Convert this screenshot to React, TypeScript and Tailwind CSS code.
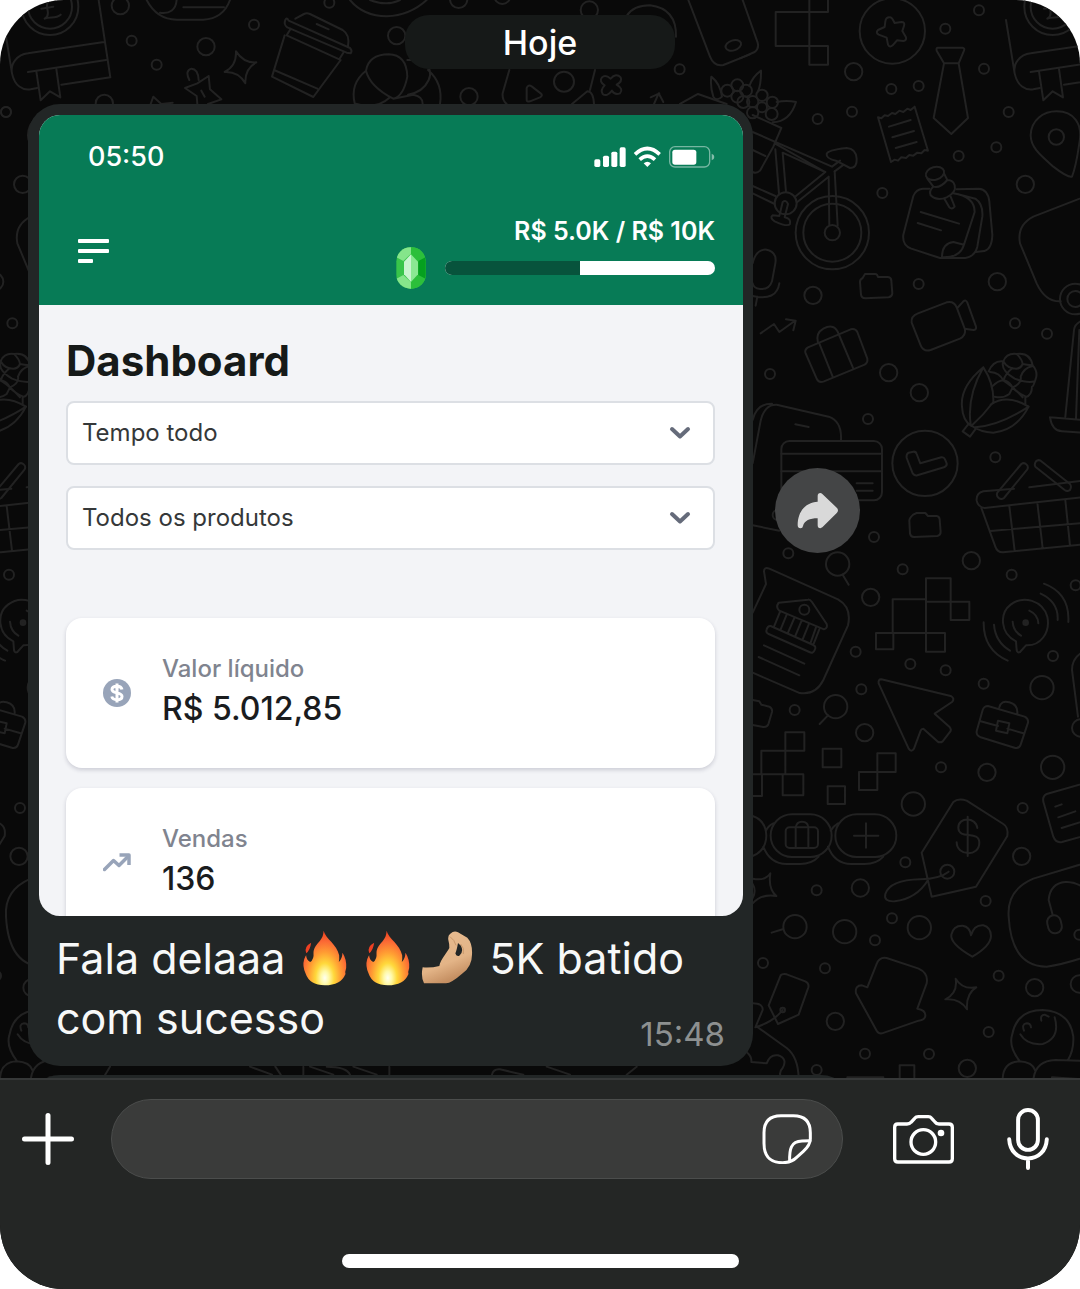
import type { ReactNode } from "react";

type Dot = [x: number, y: number, r: number];

// Wallpaper drawings use a 3x grid, so a radius of 15 is a 5px ring
const DOTS: Dot[] = [
  [717, 31, 15], [616, 86, 15], [732, 206, 15], [536, 258, 15], [454, 267, 15],
  [336, 335, 15], [233, 357, 15], [806, 336, 15], [769, 442, 15], [656, 468, 15],
  [427, 579, 15], [536, 852, 15], [825, 970, 15], [921, 1001, 15], [90, 1122, 15],
  [384, 1257, 15], [341, 215, 26], [856, 553, 26], [219, 886, 26], [772, 845, 26],
  [446, 1118, 26], [538, 1178, 26], [766, 1372, 15], [402, 1611, 15], [145, 1660, 15],
  [113, 1545, 15], [488, 1708, 15], [815, 1724, 15], [1007, 1756, 15], [347, 1955, 15],
  [511, 1992, 15], [617, 2011, 15], [939, 1968, 15], [731, 2051, 15], [364, 2068, 15],
  [164, 2130, 15], [694, 1682, 26], [392, 1792, 26], [374, 2198, 26], [906, 2063, 35],
  [1022, 2184, 26], [603, 2302, 15], [741, 2317, 26], [938, 2302, 35], [520, 2412, 35],
  [848, 2424, 15], [845, 2569, 26], [496, 2587, 15], [230, 2671, 15], [361, 2664, 26],
  [737, 2703, 15], [456, 2755, 15], [314, 2795, 35], [405, 2821, 15], [538, 2783, 35],
  [69, 2889, 15], [255, 2905, 15], [776, 2927, 15], [884, 2963, 26], [1018, 2952, 26],
  [286, 3064, 26], [746, 3096, 15], [375, 3161, 15], [567, 3162, 15], [230, 3210, 15],
  [682, 3205, 26], [1018, 2804, 15],
];

const TOP_DOTS: Dot[] = [
  [361, 17, 26], [395, 122, 15], [762, 74, 15], [618, 140, 26], [470, 194, 15],
  [18, 336, 15], [313, 310, 26], [988, 8, 15], [1190, 107, 26], [1376, -2, 26],
  [1507, -12, 24], [1768, 30, 26], [1692, 245, 30], [1407, 290, 26], [2039, 208, 15],
];

function Dots({ items }: { items: Dot[] }) {
  return (
    <>
      {items.map(([x, y, r]) => (
        <circle key={`${x}-${y}`} cx={x} cy={y} r={r} />
      ))}
    </>
  );
}

function Wallpaper() {
  return (
    <svg
      className="absolute inset-0 size-full"
      viewBox="0 0 1080 1078"
      preserveAspectRatio="xMidYMin slice"
      fill="none"
      stroke="#222222"
      strokeWidth="6"
      strokeLinecap="round"
      strokeLinejoin="round"
      aria-hidden="true"
    >
      <defs>
        <g id="book">
          <circle cx="150" cy="20" r="85" />
          <circle cx="150" cy="20" r="66" />
          <path d="M165 0C145-6 138 8 142 28C146 42 142 52 134 56C150 48 166 58 182 44M124 26L160 20" />
          <path d="M10 60L36 220C44 258 68 272 92 268L112 264M36 220C30 190 52 164 84 160L312 126M84 216L318 180M296 0L331 232L184 254" />
          <path d="M109 214L122 301L150 274L181 292L169 207" />
        </g>
        <g id="doodles">
          <Dots items={DOTS} />
          {/* phone, squares, coin */}
          <path d="M8 0L53 128Q58 145 44 156L0 175M107 36H208V138H107ZM208 0V194H264V138H208M208 36H264V0" />
          <circle cx="457" cy="93" r="98" />
          <path d="M448 52Q454 50 458 58L464 69L484 66Q496 66 492 78L487 93L498 112Q500 122 490 123L471 121L458 136Q449 144 444 134L440 113L416 104Q406 98 414 90L434 81L436 64Q438 52 448 52Z" />
          {/* tie */}
          <path d="M594 143H668Q675 145 672 152L656 190H612L590 152Q588 143 594 143ZM612 190L581 354L634 402L684 354L656 190" />
          {/* receipt */}
          <path d="M414 352L424 355L434 346L444 348L456 339L466 342L478 332L490 336L502 326L512 330L524 320L564 452L554 450L544 460L532 458L520 467L508 465L498 474L484 472L474 482L464 479L453 486ZM447 380L512 360M457 412L522 393M467 444L530 426" />
          {/* pineapple */}
          <path d="M28 258Q38 230 63 212Q64 250 54 275M110 306Q140 300 168 306Q150 365 98 367" />
          <g>
            <circle cx="18" cy="272" r="18" />
            <circle cx="66" cy="286" r="17" />
            <circle cx="38" cy="305" r="17" />
            <circle cx="97" cy="307" r="17" />
            <circle cx="66" cy="322" r="15" />
            <circle cx="10" cy="306" r="18" />
            <circle cx="38" cy="338" r="17" />
            <circle cx="95" cy="342" r="18" />
          </g>
          {/* bicycle */}
          <circle cx="277" cy="698" r="110" />
          <circle cx="277" cy="698" r="87" />
          <circle cx="277" cy="698" r="23" />
          <circle cx="137" cy="610" r="33" />
          <path d="M266 530L268 676M284 514L293 676M38 345L124 384L100 440L60 512Q50 522 38 516M38 396L276 500L300 482M38 450L76 468M104 430L256 516L168 588M106 448L117 580M128 458L138 576M128 458L256 516M172 606L266 530M38 558L106 588M38 580L104 612" />
          <path d="M320 444Q348 446 350 476Q352 504 330 504L288 482Q258 476 260 462Q262 450 320 444ZM284 514L308 496M128 606Q138 598 144 612L134 652Q154 656 150 672Q144 682 104 664Q88 654 98 646L118 648Z" />
          {/* map pin */}
          <circle cx="949" cy="411" r="23" />
          <path d="M996 530Q984 534 940 500C896 462 872 440 872 405C874 360 910 334 950 334C1000 334 1030 370 1018 430Q1008 500 996 530Z" />
          {/* notes */}
          <path d="M568 566H548Q528 568 520 588L490 704Q486 736 514 746L600 774H676Q704 770 712 740L727 650Q730 612 706 596L660 584M640 580Q704 590 704 636L672 734Q660 774 606 772Q606 730 640 726L672 734M650 568L716 566Q744 568 748 604L757 704Q756 752 726 754L708 756M542 636L657 671M533 669L603 691" />
          <ellipse cx="585" cy="520" rx="28" ry="19" transform="rotate(-16 585 520)" />
          <path d="M562 536L580 560Q566 572 572 586Q590 604 620 592Q650 578 644 556Q640 540 622 540L612 520M580 560Q600 566 622 540M614 598L628 622Q636 630 644 620L632 590" />
          {/* microphone */}
          <path d="M38 790Q48 746 80 749Q112 756 106 790L96 844Q88 870 60 867Q40 864 38 850M38 888Q110 904 118 850M52 890L47 917" />
          {/* folder and video camera */}
          <path d="M375 822H406Q412 822 414 831H444Q454 832 454 842L457 880Q456 890 446 892L376 895Q364 894 363 884L360 846Q360 838 368 834Z" />
          <path d="M534 940L620 907Q642 902 650 922L675 988Q678 1006 660 1016L572 1050Q550 1056 542 1036L515 968Q512 948 534 940ZM652 924L670 904Q678 898 682 908L708 980Q710 990 700 990L674 986" />
          {/* trend arrow, suitcase */}
          <path d="M62 1000L102 972L118 996L164 963M138 958L167 962L160 991" />
          <path d="M204 1042L332 988Q346 984 352 996L382 1076Q384 1088 374 1094L252 1144Q236 1150 230 1136L196 1058Q194 1048 204 1042ZM234 1028Q226 1000 250 986Q284 968 296 1002M237 1028L278 1130M296 1002L340 1106" />
          {/* bag on the right edge */}
          <path d="M1060 580L880 650Q830 676 840 730L890 850Q916 906 962 904" />
          <circle cx="1006" cy="897" r="46" />
          <circle cx="1006" cy="897" r="24" />
          {/* corn */}
          <path d="M730 1102Q660 1160 666 1220Q668 1262 694 1278Q730 1246 760 1206Q762 1150 730 1102ZM730 1102Q680 1190 692 1274M866 1220Q830 1290 760 1298Q720 1296 696 1278M866 1220Q800 1180 752 1214M866 1220Q780 1276 706 1282M684 1274L668 1294L690 1310L706 1288" />
          <path d="M746 1114Q760 1080 790 1084Q800 1058 830 1062Q870 1056 878 1096Q896 1116 886 1140Q880 1160 876 1160Q876 1186 856 1192V1212M790 1084Q802 1106 828 1106Q842 1106 848 1092Q860 1094 878 1096M832 1064Q846 1078 848 1092M750 1116Q780 1118 790 1142Q796 1120 818 1104M790 1084Q780 1110 824 1136Q862 1150 884 1144M756 1160Q780 1136 796 1142Q812 1148 818 1164Q840 1184 858 1190M764 1190Q790 1196 808 1182Q814 1170 818 1162Q846 1150 842 1130Q850 1104 878 1098M794 1144Q820 1160 848 1192" />
          <path d="M1030 960Q1004 970 1002 990L976 1250M1018 990L1008 1256M930 1252L1050 1262M930 1252Q936 1292 966 1294L1050 1300" />
          {/* phone and bank card */}
          <path d="M38 1390L62 1262Q74 1212 110 1214L266 1250Q306 1264 303 1320M38 1260Q50 1210 96 1211M166 1273L206 1281M38 1576L118 1592" />
          <rect x="124" y="1323" width="302" height="178" rx="24" />
          <path d="M124 1361H426M124 1414H426M350 1450H398M350 1472H398" />
          {/* check badge */}
          <circle cx="555" cy="1390" r="98" />
          <path d="M506 1358L520 1355Q528 1354 530 1362L541 1390L604 1372Q612 1371 615 1378L620 1390Q622 1398 612 1402L532 1426Q524 1428 518 1420L500 1374Q498 1362 506 1358Z" />
          <path d="M521 1543L530 1539H556L564 1548H590Q598 1549 599 1558L602 1596Q602 1606 592 1608L522 1611Q511 1610 510 1600L508 1562Q508 1554 521 1543Z" />
          {/* basket */}
          <path d="M1060 1438L868 1462M822 1466L730 1474Q708 1480 710 1502Q714 1522 734 1524L1060 1488M724 1524L766 1640Q772 1658 790 1657L1060 1630M752 1593L1060 1566M808 1518L824 1652M892 1508L908 1644M976 1500L990 1636" />
          <path d="M772 1478L844 1392Q852 1386 860 1394Q866 1400 862 1408L792 1494Q784 1500 776 1494Q768 1488 772 1478ZM902 1382L990 1452Q996 1460 990 1470Q982 1476 974 1470L886 1400Q882 1392 888 1384Q894 1378 902 1382Z" />
          {/* magnifiers */}
          <circle cx="293" cy="1692" r="35" />
          <path d="M308 1724L326 1754M264 2146L239 2172M128 2788L95 2798" />
          <circle cx="287" cy="2120" r="35" />
          <circle cx="165" cy="2780" r="35" />
          {/* bank letter */}
          <path d="M38 1838L78 1752L72 1714Q72 1700 88 1706L294 1798Q336 1822 324 1876L250 2040Q226 2088 176 2078L38 2018M72 1936L193 1991M56 1971L178 2026" />
          <path d="M116 1808L204 1799Q210 1798 216 1806L260 1872Q264 1884 252 1888L118 1832Q106 1822 116 1808ZM92 1878L220 1935Q230 1940 224 1950Q220 1962 208 1956L86 1902Q76 1898 80 1888Q84 1876 92 1878ZM120 1836L102 1880M140 1844L122 1888M163 1854L144 1898M184 1864L166 1908M206 1874L188 1918M228 1882L212 1928M238 1888L220 1934" />
          <circle cx="193" cy="1829" r="15" />
          {/* pixel blocks */}
          <path d="M458 1798H558V1899H458ZM558 1735H632V1805H558ZM632 1805H688V1860H632V1805M408 1899H460V1948H408ZM558 1899H615V1955H558ZM558 1805V1899" />
          <path d="M136 2197H193V2252H136ZM64 2252H136V2323M64 2252V2323H190V2386H128V2323M38 2323H66V2388H38M248 2246H304V2302H248ZM412 2260H467V2316H412ZM357 2316H412V2370H357ZM263 2359H315V2412H263Z" />
          {/* ringing bubble */}
          <path d="M828 1924C780 1900 778 1840 812 1814C850 1784 908 1802 922 1850C932 1900 900 1938 858 1936L840 1956Q832 1960 830 1950ZM912 1751Q990 1780 985 1866M902 1781Q956 1806 953 1860M868 1832Q894 1844 895 1870M818 1865Q820 1894 843 1907M762 1874Q766 1926 810 1952M731 1867Q730 1950 803 1982" />
          <circle cx="857" cy="1868" r="7" fill="#222222" />
          {/* cursor, briefcase, folder */}
          <path d="M424 2038L632 2088Q646 2096 636 2106L584 2141L628 2180Q636 2190 630 2196L608 2224Q600 2230 592 2224L550 2186Q544 2186 542 2192L522 2246Q514 2258 506 2246L416 2050Q414 2038 424 2038Z" />
          <path d="M744 2118L854 2150Q866 2156 864 2168L842 2234Q838 2246 826 2244L722 2212Q708 2206 710 2194L728 2130Q732 2118 744 2118ZM778 2122Q784 2100 808 2107Q834 2114 832 2140M722 2164L774 2178M802 2186L850 2200M774 2162L808 2170L802 2200L768 2192Z" />
          <path d="M38 2100L58 2104L64 2114L88 2120Q98 2126 96 2136L86 2170Q82 2182 70 2181L38 2175M1040 1950Q996 1968 996 2010L1014 2150" />
          {/* round buttons */}
          <rect x="92" y="2443" width="183" height="128" rx="64" />
          <rect x="286" y="2443" width="183" height="128" rx="64" />
          <rect x="137" y="2482" width="97" height="62" rx="12" />
          <path d="M38 2448Q78 2462 79 2507Q78 2552 38 2568M100 2470Q84 2478 78 2492M70 2540Q90 2592 140 2592H180Q216 2592 236 2570M294 2470Q280 2478 272 2492M264 2540Q284 2592 334 2592H374Q410 2592 430 2570M167 2482V2544M205 2482V2544M167 2482Q170 2465 186 2465Q204 2465 205 2482M342 2507H415M378 2470V2543" />
          {/* price tag */}
          <path d="M640 2406Q654 2394 680 2402L790 2472Q806 2482 802 2508L708 2660L575 2690L545 2558ZM712 2484C708 2450 654 2450 655 2484C656 2520 718 2490 718 2528C718 2572 650 2568 650 2527M683 2450V2568M626 2615Q600 2636 540 2638Q450 2640 436 2682Q430 2706 464 2704Q530 2696 564 2640" />
          <circle cx="622" cy="2615" r="21" />
          {/* sheet, headset */}
          <path d="M1060 2342L920 2382Q904 2390 912 2412L940 2510Q948 2530 966 2526L1060 2500M946 2420L965 2413M955 2452L1006 2434M965 2484L1060 2454" />
          <path d="M1060 2582L880 2636Q800 2670 806 2750Q814 2900 920 2900Q980 2892 1060 2862M938 2744L926 2700Q930 2650 976 2646Q1010 2644 1040 2670" />
          <rect x="923" y="2746" width="41" height="54" rx="20" transform="rotate(-14 943 2773)" />
          {/* sparkles, heart */}
          <path d="M38 2636Q76 2644 91 2620Q84 2666 109 2688Q66 2680 38 2710M38 2652Q50 2672 38 2694M647 2936Q668 2970 709 2962Q678 2980 681 3028Q660 2994 616 2998Q654 2980 647 2936Z" />
          <path d="M697 2870Q630 2832 634 2804Q640 2776 668 2777Q690 2780 693 2806Q702 2774 730 2776Q752 2782 753 2808Q752 2838 697 2870Z" />
          {/* small tag, mitten */}
          <path d="M122 2926Q128 2920 140 2923L196 2944Q208 2950 205 2962L176 3044L114 3072L86 3016ZM128 3030Q100 3066 46 3082M38 3010Q70 3010 68 3030L48 3078L140 3144Q176 3172 176 3240" />
          <circle cx="128" cy="3030" r="7" />
          <path d="M382 2962L410 2892Q418 2870 440 2874L536 2906Q566 2920 560 2950L532 3026Q558 3030 556 3048Q554 3060 536 3062L426 3100Q416 3102 410 3092L348 2980Q344 2956 366 2956Z" />
          {/* smiling group */}
          <path d="M838 3182Q806 3140 816 3106Q830 3030 908 3030Q990 3034 1000 3110Q1002 3150 984 3180M841 3103Q860 3136 908 3132Q962 3114 944 3052M852 3092Q844 3072 860 3070Q872 3070 873 3082M904 3062Q900 3044 914 3044L926 3050M788 3240Q788 3186 838 3184Q878 3186 886 3212M880 3240Q886 3182 946 3180L1060 3184M936 3232L1060 3240" />
          {/* bone, box, flat line */}
          <path d="M22 3158Q36 3170 34 3186L80 3190Q90 3162 114 3166Q144 3176 128 3204Q112 3220 128 3240M479 3240V3196H523V3240M322 3232H430" />
        </g>
      </defs>

      <g transform="scale(0.33333)">
        <use href="#book" />
        <use href="#book" x="3008" />
        <use href="#doodles" x="2220" />
        <use href="#doodles" x="-788" />
        <Dots items={TOP_DOTS} />
        {/* coffee cup */}
        <path d="M854 106L816 230L940 291L1022 180M822 210L952 266M866 62L1050 144Q1058 152 1052 160L1040 158L862 82Q850 74 856 60Q860 50 866 62ZM872 86L860 106L1018 178L1030 158M886 56L912 42Q920 38 930 42L1028 90Q1050 104 1044 138M950 72L986 88" />
        {/* sparkle, stars */}
        <path d="M708 154Q732 190 769 187Q734 206 736 250Q716 214 674 216Q710 198 708 154ZM626 228L630 268L664 298L624 312M592 312L590 288L555 264L592 250L626 228M568 240Q554 212 574 206Q594 206 596 240M604 272L614 290M452 312L460 290L484 312L518 308" />
        {/* bowls */}
        <path d="M440 0Q470 58 530 59H610Q670 56 690 0M480 38Q526 44 530 0M550 22H672M1050 0Q1090 48 1160 49Q1230 46 1280 0M1110 0Q1160 20 1200 0" />
        {/* basketball */}
        <path d="M1064 310Q1050 250 1098 212Q1106 164 1166 163Q1220 164 1222 230Q1210 290 1180 296Q1110 260 1098 212M1064 310Q1130 330 1170 292M1222 180H1270Q1300 212 1286 240Q1270 276 1224 284M1284 210Q1330 250 1320 312M1180 296L1240 284Q1270 290 1268 312" />
        <path d="M1528 210L1508 280Q1506 300 1520 312M1785 210L1770 270M1580 300V264Q1584 252 1596 260L1622 280Q1630 286 1620 292L1590 304Q1580 306 1580 300ZM1716 312L1762 274Q1780 274 1782 312" />
        <path d="M1880 48Q1900 16 1950 16Q2030 26 2028 110M1806 232Q1816 222 1832 236Q1848 218 1862 232Q1868 244 1850 254Q1872 268 1860 280Q1844 286 1836 272Q1820 292 1808 282Q1800 270 1814 256Q1796 244 1806 232ZM1962 312L1976 280L1990 306M1952 292L1978 280M2040 312L2094 282L2180 312" />
        <path d="M2065 0L2130 170Q2142 200 2170 195L2250 163M2134 230Q2160 250 2166 290Q2150 306 2140 290Q2130 260 2134 230Z" />
        <ellipse cx="2200" cy="136" rx="24" ry="15" transform="rotate(-18 2200 136)" />
        <circle cx="2182" cy="272" r="18" />
        <circle cx="2212" cy="256" r="18" />
        <circle cx="2212" cy="290" r="18" />
        {/* strip under the message */}
        <path d="M330 3200L312 3230M750 3200L816 3224M826 3200L842 3224M910 3200V3224M930 3200L1000 3224M980 3200Q1040 3200 1050 3224M1060 3200L1130 3224M1168 3200V3224M1476 3224Q1480 3206 1500 3208L1570 3224M1640 3200L1710 3224M1910 3200L1880 3224" />
      </g>
    </svg>
  );
}

function StatusIcons() {
  return (
    <svg className="h-[22px] w-[121px]" viewBox="640 438 363 66" fill="white" aria-hidden="true">
      <rect x="641" y="478" width="18" height="23" rx="5" />
      <rect x="667" y="467" width="18" height="34" rx="5" />
      <rect x="692" y="455" width="18" height="46" rx="5" />
      <rect x="717" y="442" width="18" height="59" rx="5" />
      <g fill="none" stroke="white" strokeWidth="11">
        <path d="M763 463Q800 428 837 463" />
        <path d="M777 479Q800 458 823 479" />
      </g>
      <path d="M789 490Q800 481 811 490L800 501Z" />
      <rect x="867" y="440" width="120" height="61" rx="16" fill="none" stroke="white" strokeWidth="4" opacity="0.45" />
      <rect x="875" y="449" width="72" height="45" rx="8" />
      <path d="M993 461Q1001 464 1001 471Q1001 478 993 481Z" opacity="0.5" />
    </svg>
  );
}

function GemIcon() {
  return (
    <svg className="h-[42px] w-[30px] shrink-0" viewBox="48 740 90 126" aria-hidden="true">
      <clipPath id="gem">
        <rect x="49" y="741" width="88" height="124" rx="42" />
      </clipPath>
      <g clipPath="url(#gem)">
        <path d="M48 740H138V866H48Z" fill="#38c54a" />
        <path d="M93 740V866H138V740Z" fill="#2cbf3b" />
        <path d="M48 770L70 782L93 760V740H48Z" fill="#85e58b" />
        <path d="M48 836L70 824L93 846V866H48Z" fill="#85e58b" />
        <path d="M115 782L138 770V836L115 824Z" fill="#05a01f" />
        <path d="M93 762L72 784V822L93 845Z" fill="#c9f5cf" />
        <path d="M93 762L114 784V822L93 845Z" fill="#8ae892" />
      </g>
    </svg>
  );
}

function DollarIcon() {
  return (
    <svg className="size-7" viewBox="0 0 28 28" aria-hidden="true">
      <circle cx="14" cy="14" r="14" fill="#98a4b9" />
      <path
        d="M19 10.5C18.500 8.500 16.500 7.300 14 7.300C11 7.300 9 8.500 9 10.600C9 15 19 12.800 19 17.400C19 19.500 17 20.700 14 20.700C11.300 20.700 9.300 19.500 8.800 17.500M14 4.500V23.500"
        fill="none"
        stroke="white"
        strokeWidth="3"
      />
    </svg>
  );
}

function TrendIcon() {
  return (
    <svg className="size-7" viewBox="0 0 28 28" fill="none" stroke="#98a4b9" strokeWidth="3.5" strokeLinejoin="round" aria-hidden="true">
      <path d="M1.500 20.500L10.500 11.500L16 16.500L25 7.500" strokeLinecap="round" />
      <path d="M16.500 6H26V16" />
    </svg>
  );
}

function Fire({ id }: { id: string }) {
  return (
    <svg className="h-14 w-[47px] shrink-0" viewBox="906 88 138 168" role="img" aria-label="🔥">
      <radialGradient id={id} gradientUnits="userSpaceOnUse" cx="976" cy="232" r="140" gradientTransform="translate(976 232) scale(0.62 1) translate(-976 -232)">
        <stop offset="0" stopColor="#fffff0" />
        <stop offset="0.14" stopColor="#fff9a8" />
        <stop offset="0.32" stopColor="#ffd83b" />
        <stop offset="0.55" stopColor="#ff9d33" />
        <stop offset="0.78" stopColor="#fb6a35" />
        <stop offset="1" stopColor="#f0401f" />
      </radialGradient>
      <path
        d="M972 90C980 116 1012 130 1019 164Q1020 176 1018 184Q1028 174 1029 156Q1042 176 1040 202Q1036 214 1038 220Q1024 254 976 254Q930 254 918 218Q908 196 914 176Q918 166 920 164Q920 178 932 184Q944 176 942 156C944 126 972 124 972 90Z"
        fill={`url(#${id})`}
      />
      <path d="M935 126Q912 138 920 158Q932 148 935 126Z" fill="#ef4023" />
    </svg>
  );
}

function PinchedHand() {
  return (
    <svg className="-ml-1.5 h-14 w-[52px] shrink-0" viewBox="125 88 156 168" role="img" aria-label="🤌">
      <linearGradient id="skin" x1="0" y1="0" x2="0.4" y2="1">
        <stop offset="0" stopColor="#e8bd92" />
        <stop offset="0.7" stopColor="#e3b487" />
        <stop offset="1" stopColor="#c58f62" />
      </linearGradient>
      <path
        fillRule="evenodd"
        d="M130 200Q156 202 180 196C184 176 202 158 210 142Q210 128 207 118Q205 106 212 100L220 94Q228 90 236 95L264 111Q280 128 278 162Q278 196 250 218Q216 248 200 248L134 248Q124 228 130 200ZM236 127Q232 150 228 158Q230 168 240 165Q250 158 248 144Q246 134 236 127Z"
        fill="url(#skin)"
      />
      <path d="M212 108Q226 118 230 134M244 130Q256 142 252 160" fill="none" stroke="#c9986b" strokeWidth="3" />
    </svg>
  );
}

function FilterSelect({ label, value }: { label: string; value: string }) {
  return (
    <div className="relative">
      <select
        aria-label={label}
        className="block h-16 w-full appearance-none rounded-lg border-2 border-[#dcdfe4] bg-white px-[14px] text-2xl text-[#353839]"
      >
        <option>{value}</option>
      </select>
      <svg
        className="pointer-events-none absolute top-[25px] right-6 h-[14px] w-[22px]"
        viewBox="0 0 22 14"
        fill="none"
        stroke="#656b7a"
        strokeWidth="4"
        strokeLinecap="round"
        strokeLinejoin="round"
        aria-hidden="true"
      >
        <path d="M3 3L11 10.500L19 3" />
      </svg>
    </div>
  );
}

function StatCard({ icon, label, value }: { icon: ReactNode; label: string; value: string }) {
  return (
    <div className="flex h-[150px] shrink-0 items-center gap-[31px] rounded-2xl bg-white pl-[37px] shadow-[0_2px_4px_rgba(30,30,60,0.18)]">
      {icon}
      <dl className="flex flex-col gap-1 pb-1">
        <dt className="text-2xl leading-8 font-medium text-[#80848f]">{label}</dt>
        <dd className="text-[32px] leading-10 font-medium text-[#1a1c1e]">{value}</dd>
      </dl>
    </div>
  );
}

function DashboardShot() {
  return (
    <div className="flex aspect-[704/801] flex-col overflow-hidden rounded-[21px] bg-[#f3f4f7]">
      <header className="bg-[#077b56] pt-7 pr-7 pb-4 text-white">
        <div className="flex h-7 items-center justify-between pl-[49px]">
          <span className="text-[27px] leading-7 font-medium">05:50</span>
          <StatusIcons />
        </div>

        <div className="mt-[46px] flex items-center justify-between pl-[39px]">
          <button type="button" aria-label="Menu" className="pb-1">
            <svg className="h-[26px] w-[31px]" viewBox="0 0 31 26" fill="white">
              <rect width="31" height="4" y="1" rx="1" />
              <rect width="31" height="4" y="11" rx="1" />
              <rect width="15" height="4" y="21" rx="1" />
            </svg>
          </button>
          <div className="flex flex-col items-end gap-0.5">
            <span className="text-[25px] leading-7 font-semibold">R$ 5.0K / R$ 10K</span>
            <div className="flex items-center gap-[19px]">
              <GemIcon />
              <div className="h-[14px] w-[270px] overflow-hidden rounded-full bg-white">
                <div className="h-full w-1/2 bg-[#07533c]" />
              </div>
            </div>
          </div>
        </div>
      </header>

      <div className="flex flex-col pt-8 pr-7 pl-[27px]">
        <h1 className="mb-4 text-[42px] leading-[48px] font-bold text-[#161a19]">Dashboard</h1>
        <div className="mb-[68px] flex flex-col gap-[21px]">
          <FilterSelect label="Período" value="Tempo todo" />
          <FilterSelect label="Produto" value="Todos os produtos" />
        </div>
        <div className="flex flex-col gap-5">
          <StatCard icon={<DollarIcon />} label="Valor líquido" value="R$ 5.012,85" />
          <StatCard icon={<TrendIcon />} label="Vendas" value="136" />
        </div>
      </div>
    </div>
  );
}

function Caption() {
  return (
    <div className="mt-3 pr-[18px] pl-[17px] text-[43px] leading-[60px] text-[#f7f8f8]">
      <p className="flex items-center gap-4 whitespace-nowrap">
        <span>Fala delaaa</span>
        <Fire id="fire-1" />
        <Fire id="fire-2" />
        <PinchedHand />
        <span>5K batido</span>
      </p>
      <div className="flex items-end justify-between">
        <p>com sucesso</p>
        <time className="text-[33px] leading-7 text-[#8d9090]">15:48</time>
      </div>
    </div>
  );
}

function MessageInput() {
  return (
    <footer className="border-t-2 border-[#363838] bg-[#242625] pt-[19px] pb-[21px]">
      <div className="flex items-center pr-[31px] pl-[22px] text-white">
        <button type="button" aria-label="Anexar">
          <svg className="size-[52px]" viewBox="0 0 52 52" stroke="currentColor" strokeWidth="5" strokeLinecap="round">
            <path d="M26 2.500V49.500M2.500 26H49.500" />
          </svg>
        </button>
        <div className="mr-[50px] ml-[37px] flex h-20 flex-1 items-center rounded-full border border-[#4b4d4c] bg-[#3a3b3a] pr-[30px]">
          <input type="text" aria-label="Mensagem" className="h-full min-w-0 flex-1 bg-transparent pl-8 text-4xl outline-none" />
          <button type="button" aria-label="Figurinhas">
            <svg className="size-[50px]" viewBox="66 162 150 150" fill="none" stroke="currentColor" strokeWidth="9" strokeLinecap="round" strokeLinejoin="round">
              <path d="M123 167H160C194 167 211 184 211 218V236C211 252 203 262 190 274L170 292C158 304 146 308 128 308C90 308 72 290 72 250V218C72 184 89 167 123 167Z" />
              <path d="M149 304C148 268 152 244 186 243L210 242" />
            </svg>
          </button>
        </div>
        <button type="button" aria-label="Câmera" className="mr-[53px]">
          <svg className="h-[49px] w-[61px]" viewBox="460 163 183 147" fill="none" stroke="currentColor" strokeWidth="10" strokeLinejoin="round">
            <path d="M474 190H502Q510 190 514 185L525 173Q529 168 536 168H566Q572 168 576 173L586 184Q590 190 598 190H628Q638 190 638 200V294Q638 304 628 304H475Q465 304 465 294V200Q465 190 474 190Z" />
            <circle cx="551" cy="244" r="37" />
            <circle cx="604" cy="217" r="10" fill="currentColor" stroke="none" />
          </svg>
        </button>
        <button type="button" aria-label="Gravar áudio">
          <svg className="h-[62px] w-[42px]" viewBox="801 138 126 188" fill="none" stroke="currentColor" strokeWidth="12" strokeLinecap="round">
            <rect x="834" y="144" width="60" height="121" rx="30" />
            <path d="M807 233C809 268 832 291 864 291C896 291 919 268 921 233M864 291V320" />
          </svg>
        </button>
      </div>
      <div className="mx-auto mt-[75px] h-[14px] w-[397px] rounded-full bg-white" />
    </footer>
  );
}

export default function App() {
  return (
    <div className="min-h-screen bg-white font-['Inter',sans-serif]">
      <div className="flex min-h-screen flex-col overflow-hidden rounded-[64px] bg-[#090909]">
        <main className="relative flex-1 overflow-hidden">
          <Wallpaper />

          <div className="relative flex flex-col pt-[15px]">
            <div className="mx-auto mb-[35px] flex h-[54px] w-[270px] items-center justify-center rounded-[24px] bg-[#161918] text-[34px] font-medium text-white">
              Hoje
            </div>

            <div className="flex gap-[22px] pr-[220px] pl-7">
              <article className="min-w-0 flex-1 rounded-[32px] bg-[#222626] pt-[11px] pr-[10px] pb-[18px] pl-[11px]">
                <DashboardShot />
                <Caption />
              </article>
              <button
                type="button"
                aria-label="Encaminhar"
                className="mb-[150px] flex size-[85px] shrink-0 items-center justify-center self-center rounded-full bg-[#444546]"
              >
                <svg className="h-[37px] w-[42px]" viewBox="170 272 126 111" fill="#d9d9d9">
                  <path d="M240 275Q232 275 232 284V301C196 303 172 330 172 372Q172 381 181 381Q187 381 188 374C192 358 208 351 232 351V372Q232 381 240 381L246 378L290 334Q296 327 290 320L246 278Q243 275 240 275Z" />
                </svg>
              </button>
            </div>

            {/* top edge of the next message */}
            <div className="mt-[9px] mr-[227px] ml-7 h-[3px] overflow-hidden">
              <div className="h-16 rounded-[32px] bg-[#222626]" />
            </div>
          </div>
        </main>

        <MessageInput />
      </div>
    </div>
  );
}
